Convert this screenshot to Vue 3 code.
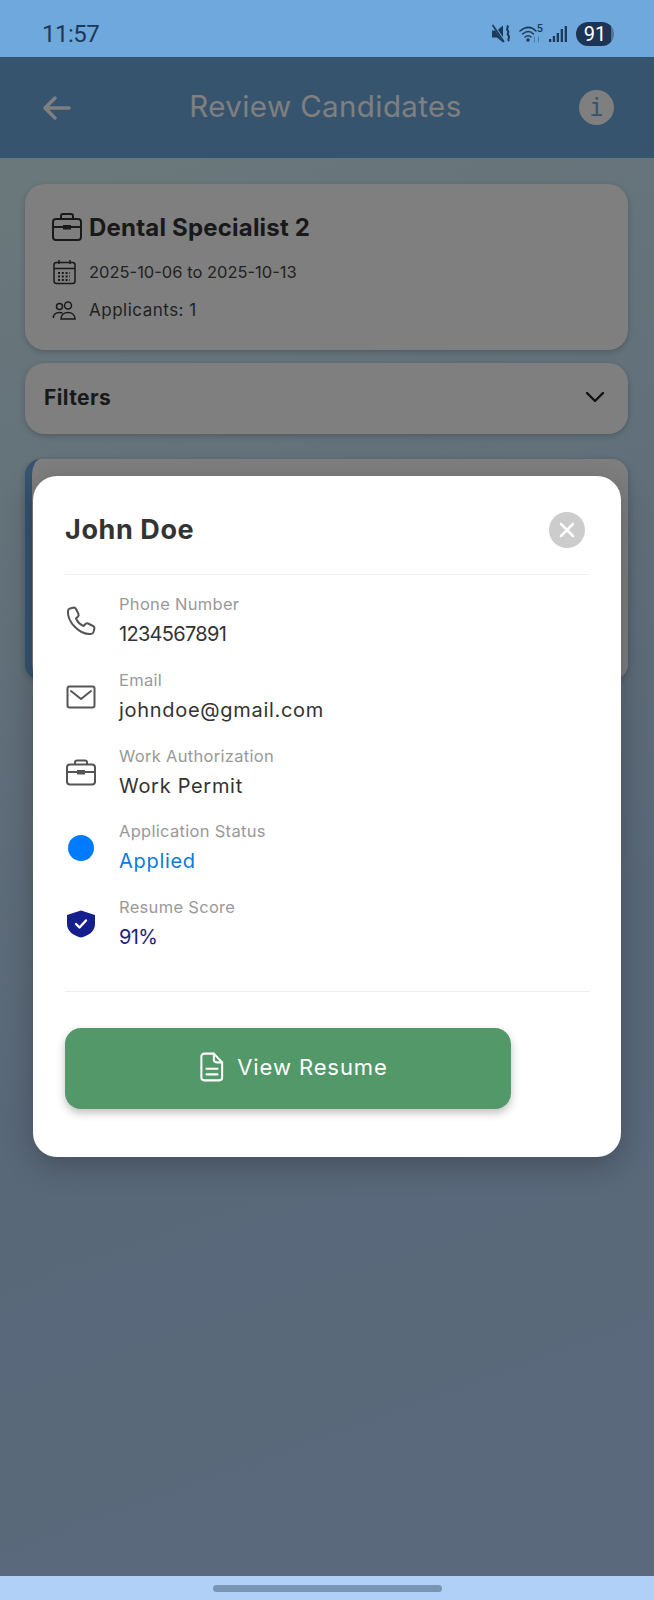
<script setup>
const rows = [
  { key: 'phone', label: 'Phone Number', value: '1234567891', cls: 'digits' },
  { key: 'mail', label: 'Email', value: 'johndoe@gmail.com', cls: '' },
  { key: 'case', label: 'Work Authorization', value: 'Work Permit', cls: '' },
  { key: 'dot', label: 'Application Status', value: 'Applied', cls: 'applied' },
  { key: 'shield', label: 'Resume Score', value: '91%', cls: 'score' }
]
</script>

<template>
  <div class="screen">
    <div class="statusbar">
      <span class="time">11:57</span>
      <div class="status-icons">
        <svg class="i-mute" width="20" height="20" viewBox="0 0 20 20">
          <path d="M0 6.500h5L11 1.500v17l-6-5H0z" fill="#1c3a58"/>
          <path d="M1 1l11 16" stroke="#6ea8dc" stroke-width="2.800"/>
          <path d="M.5 1l11.500 17" stroke="#1c3a58" stroke-width="1.800"/>
          <path d="M15 1.500c2.500 2-1.500 3 .7 5s-1.500 3 .7 5-1.500 3 .7 5.500" fill="none" stroke="#1c3a58" stroke-width="2"/>
        </svg>
        <div class="wifi">
          <svg width="24" height="20" viewBox="0 0 24 20" fill="none" stroke="#1c3a58" stroke-width="1.500" stroke-linecap="round">
            <path d="M1 7c6-5 11-5 16 0"/>
            <path d="M3.500 10c4-3.500 7.500-3.500 11 0"/>
            <path d="M6 13c2.500-2 4-2 6 0"/>
            <circle cx="9" cy="16" r="1" fill="#1c3a58"/>
            <path d="M15.500 18v-5M19.500 18v-5" stroke="#4c7aa6" stroke-width="1"/>
          </svg>
          <span class="wifi5">5</span>
        </div>
        <svg width="18" height="18" viewBox="0 0 18 18" fill="#1c3a58">
          <rect x="0" y="14" width="2.300" height="3"/>
          <rect x="3.800" y="11" width="2.300" height="6"/>
          <rect x="7.700" y="8" width="2.300" height="9"/>
          <rect x="11.700" y="4" width="2.300" height="13"/>
          <rect x="15.700" y="1" width="2.300" height="16"/>
        </svg>
        <div class="battery"><span>91</span></div>
      </div>
    </div>

    <header class="appbar">
      <svg width="30" height="30" viewBox="0 0 30 30" fill="none" stroke="#fff" stroke-width="3.500" stroke-linecap="round" stroke-linejoin="round">
        <path d="M27 15H3M13 5L3 15l10 10"/>
      </svg>
      <h1>Review Candidates</h1>
      <div class="info">i</div>
    </header>

    <main class="content">
      <section class="card job">
        <div class="job-title">
          <svg width="32" height="30" viewBox="0 0 32 30" fill="none" stroke="#333" stroke-width="2">
            <rect x="2" y="7" width="28" height="21" rx="3"/>
            <path d="M10 7V4a2 2 0 0 1 2-2h8a2 2 0 0 1 2 2v3M2 15h28"/>
            <rect x="13" y="14" width="6" height="2.500" fill="#333"/>
          </svg>
          <h2>Dental Specialist 2</h2>
        </div>
        <div class="job-row date">
          <svg width="26" height="26" viewBox="0 0 26 26" fill="none" stroke="#333" stroke-width="1.500">
            <rect x="3" y="3.500" width="21" height="21" rx="2.500"/>
            <path d="M3 9.500h21M8 1v4M19 1v4"/>
            <path d="M7 14h12M7 17.500h12M7 21h12" stroke-width="2" stroke-dasharray="2 1.800"/>
          </svg>
          <span>2025-10-06 to 2025-10-13</span>
        </div>
        <div class="job-row">
          <svg width="26" height="26" viewBox="0 0 26 26" fill="none" stroke="#333" stroke-width="1.500">
            <circle cx="8.500" cy="9.500" r="3"/>
            <circle cx="17" cy="8.500" r="3.500"/>
            <path d="M2.500 21c-.5-3.500 2-5.500 6-5.500 1 0 2 .2 3 .5M10 22c0-4 3-6.500 7-6.500s7 2.500 7 6.500z"/>
          </svg>
          <span class="soft">Applicants: 1</span>
        </div>
      </section>

      <section class="card filters">
        <span>Filters</span>
        <svg width="24" height="24" viewBox="0 0 24 24" fill="none" stroke="#222" stroke-width="2.400" stroke-linecap="round" stroke-linejoin="round">
          <path d="M4 8l8 8 8-8"/>
        </svg>
      </section>

      <section class="card candidate"></section>
    </main>

    <div class="overlay">
      <div class="modal">
        <div class="modal-head">
          <h3>John Doe</h3>
          <div class="close">
            <svg width="16" height="16" viewBox="0 0 16 16" stroke="#fff" stroke-width="2.600" stroke-linecap="round">
              <path d="M2 2l12 12M14 2L2 14"/>
            </svg>
          </div>
        </div>

        <div class="rows">
          <div v-for="r in rows" :key="r.key" class="row">
            <div class="row-icon">
              <svg v-if="r.key === 'phone'" width="32" height="32" viewBox="0 0 32 32" fill="none" stroke="#555" stroke-width="2" stroke-linejoin="round">
                <path d="M5 3.500L9 2.500c1 0 1.500.5 2 1.500l2.500 5c.4 1 .2 1.800-.5 2.500L11 13.500c1.500 3.500 4 6 7.500 7.500l2-2c.7-.7 1.500-.9 2.500-.5l5 2.500c1 .5 1.500 1 1.500 2l-1 4c-.4 1.200-1.300 2-2.500 2C15 30 2 17 3 5.800 3.100 4.700 3.800 3.900 5 3.500z"/>
              </svg>
              <svg v-else-if="r.key === 'mail'" width="32" height="32" viewBox="0 0 32 32" fill="none" stroke="#555" stroke-width="2" stroke-linejoin="round">
                <rect x="2.500" y="5.500" width="27" height="21" rx="2"/>
                <path d="M6 10l10 8 10-8" stroke-linecap="round"/>
              </svg>
              <svg v-else-if="r.key === 'case'" width="32" height="32" viewBox="0 0 32 32" fill="none" stroke="#555" stroke-width="2">
                <rect x="2" y="7.500" width="28" height="20" rx="3"/>
                <path d="M10 7.500V5.500a2 2 0 0 1 2-2h8a2 2 0 0 1 2 2v2M2 15h28"/>
                <rect x="13" y="14" width="6" height="2.500" fill="#555"/>
              </svg>
              <svg v-else-if="r.key === 'dot'" width="28" height="28" viewBox="0 0 28 28">
                <circle cx="14" cy="14" r="13" fill="#007bff"/>
              </svg>
              <svg v-else width="30" height="30" viewBox="0 0 30 30">
                <path d="M15 1.500L29 6v9c0 7-6 11.500-14 13.500C7 26.500 1 22 1 15V6z" fill="#141e8c"/>
                <path d="M10 15l3.500 3.500 6.500-7" fill="none" stroke="#fff" stroke-width="2.400" stroke-linecap="round" stroke-linejoin="round"/>
              </svg>
            </div>
            <div>
              <div class="label">{{ r.label }}</div>
              <div class="value" :class="r.cls">{{ r.value }}</div>
            </div>
          </div>
        </div>

        <div class="divider"></div>

        <button class="resume" type="button">
          <svg width="24" height="30" viewBox="0 0 26 32" fill="none" stroke="#fff" stroke-width="2.200" stroke-linejoin="round" stroke-linecap="round">
            <path d="M4.500 1.500H15l9 9.500v16.500a3 3 0 0 1-3 3H4.500a3 3 0 0 1-3-3v-23a3 3 0 0 1 3-3z"/>
            <path d="M15 1.500V8a3 3 0 0 0 3 3h6M7 18h12M7 24h12"/>
          </svg>
          <span>View Resume</span>
        </button>
      </div>
    </div>

    <div class="navbar"><div class="handle"></div></div>
  </div>
</template>

<style>
html, body { margin: 0; padding: 0; }
</style>

<style scoped>
* { box-sizing: border-box; }
.screen {
  position: relative;
  width: 654px;
  height: 1600px;
  overflow: hidden;
  display: flex;
  flex-direction: column;
  font-family: Inter, "Open Sans", sans-serif;
  background: linear-gradient(160deg, #dcf6f8 0%, #b2d0f2 62%, #b4d4f8 100%);
}
.statusbar {
  position: relative;
  z-index: 3;
  height: 57px;
  flex: none;
  background: #6ea8dc;
  display: flex;
  align-items: center;
  justify-content: space-between;
  padding: 11px 40px 0 42px;
}
.time {
  font-family: Roboto, sans-serif;
  font-size: 24px;
  letter-spacing: -0.5px;
  color: #1c3a58;
}
.status-icons { display: flex; align-items: center; }
.i-mute { margin-right: 7px; }
.wifi { position: relative; width: 24px; height: 20px; margin-right: 6px; }
.wifi svg { display: block; }
.wifi5 {
  position: absolute;
  right: 0;
  top: -2px;
  font-family: Roboto, sans-serif;
  font-size: 11px;
  font-weight: 500;
  color: #1c3a58;
}
.battery {
  margin-left: 9px;
  width: 38px;
  height: 24px;
  border-radius: 12px;
  background: linear-gradient(90deg, #1c3554 91%, #4d7398 91%);
  display: flex;
  align-items: center;
  justify-content: center;
  font-family: Roboto, sans-serif;
  font-size: 20px;
  color: #fff;
}
.appbar {
  flex: none;
  height: 101px;
  background: #6ea8dc;
  display: flex;
  align-items: center;
  justify-content: space-between;
  padding: 0 40px 0 42px;
}
.appbar h1 {
  margin: -4px 0 0;
  font-size: 29.500px;
  font-weight: 400;
  letter-spacing: 0.4px;
  color: #fff;
}
.info {
  width: 35px;
  height: 35px;
  border-radius: 50%;
  background: #fff;
  display: flex;
  align-items: center;
  justify-content: center;
  font-family: "DejaVu Sans Mono", monospace;
  font-weight: 400;
  font-size: 24px;
  color: #6ea8dc;
}
.content {
  flex: 1;
  padding: 26px 26px 0 25px;
}
.card {
  background: #fff;
  border-radius: 20px;
  box-shadow: 0 2px 6px rgba(0, 0, 0, 0.2);
}
.job {
  height: 166px;
  padding: 28px 27px 0;
}
.job-title {
  display: flex;
  align-items: center;
  gap: 6px;
  height: 30px;
  margin-bottom: 17px;
}
.job-title svg { margin-left: -1px; }
.job-title h2 {
  margin: 0;
  font-size: 24px;
  font-weight: 700;
  color: #333;
  letter-spacing: 0.2px;
}
.job-row {
  display: flex;
  align-items: center;
  gap: 12px;
  height: 26px;
  font-size: 17px;
  color: #444;
}
.job-row.date {
  font-size: 16.500px;
  margin-bottom: 12px;
}
.job-row svg { margin-left: -1px; }
.soft { letter-spacing: 0.5px; }
.filters {
  margin-top: 13px;
  height: 71px;
  padding: 0 21px 3px 19px;
  display: flex;
  align-items: center;
  justify-content: space-between;
  font-size: 21px;
  font-weight: 700;
  letter-spacing: 0.4px;
  color: #333;
}
.candidate {
  margin-top: 25px;
  height: 221px;
  border-left: 7px solid #6aa8e0;
  border-radius: 16px;
}
.overlay {
  position: absolute;
  left: 0;
  right: 0;
  top: 57px;
  bottom: 24px;
  background: rgba(0, 0, 0, 0.5);
  padding: 419px 33px 0;
  z-index: 2;
}
.modal {
  width: 588px;
  height: 681px;
  background: #fff;
  border-radius: 24px;
  padding: 0 32px;
  box-shadow: 0 8px 30px rgba(0, 0, 0, 0.25);
}
.modal-head {
  height: 99px;
  padding: 36px 4px 0 0;
  border-bottom: 1px solid #eee;
  display: flex;
  justify-content: space-between;
}
.modal-head h3 {
  margin: 0;
  font-size: 27px;
  line-height: 36px;
  font-weight: 700;
  letter-spacing: 0.6px;
  color: #333;
}
.close {
  width: 36px;
  height: 36px;
  border-radius: 50%;
  background: #ccc;
  display: flex;
  align-items: center;
  justify-content: center;
}
.rows {
  padding-top: 20px;
  display: flex;
  flex-direction: column;
  gap: 23.800px;
}
.row { display: flex; align-items: center; }
.row-icon {
  width: 32px;
  height: 32px;
  margin-right: 22px;
  display: flex;
  align-items: center;
  justify-content: center;
}
.label {
  font-size: 16.500px;
  line-height: 18px;
  color: #999;
  letter-spacing: 0.3px;
}
.value {
  margin-top: 8px;
  font-size: 20px;
  line-height: 26px;
  color: #333;
  letter-spacing: 0.7px;
}
.value.digits { letter-spacing: -0.7px; }
.value.applied { color: #0a7ae0; }
.value.score { color: #1a237e; letter-spacing: -0.7px; }
.divider {
  margin-top: 41px;
  height: 1px;
  background: #eee;
  margin-right: -1px;
}
.resume {
  margin-top: 36px;
  width: 446px;
  height: 81px;
  border: none;
  border-radius: 16px;
  background: #529868;
  box-shadow: 0 4px 8px rgba(0, 0, 0, 0.25);
  padding: 0 0 3px 12px;
  display: flex;
  align-items: center;
  justify-content: center;
  gap: 13px;
  font-family: inherit;
  font-size: 22px;
  font-weight: 400;
  color: #fff;
  letter-spacing: 0.9px;
}
.navbar {
  position: absolute;
  left: 0;
  right: 0;
  bottom: 0;
  height: 24px;
  background: #b0d0f8;
  z-index: 3;
  display: flex;
  justify-content: center;
  padding-top: 9px;
}
.handle {
  width: 229px;
  height: 7px;
  border-radius: 4px;
  background: #7a94b4;
}
</style>
